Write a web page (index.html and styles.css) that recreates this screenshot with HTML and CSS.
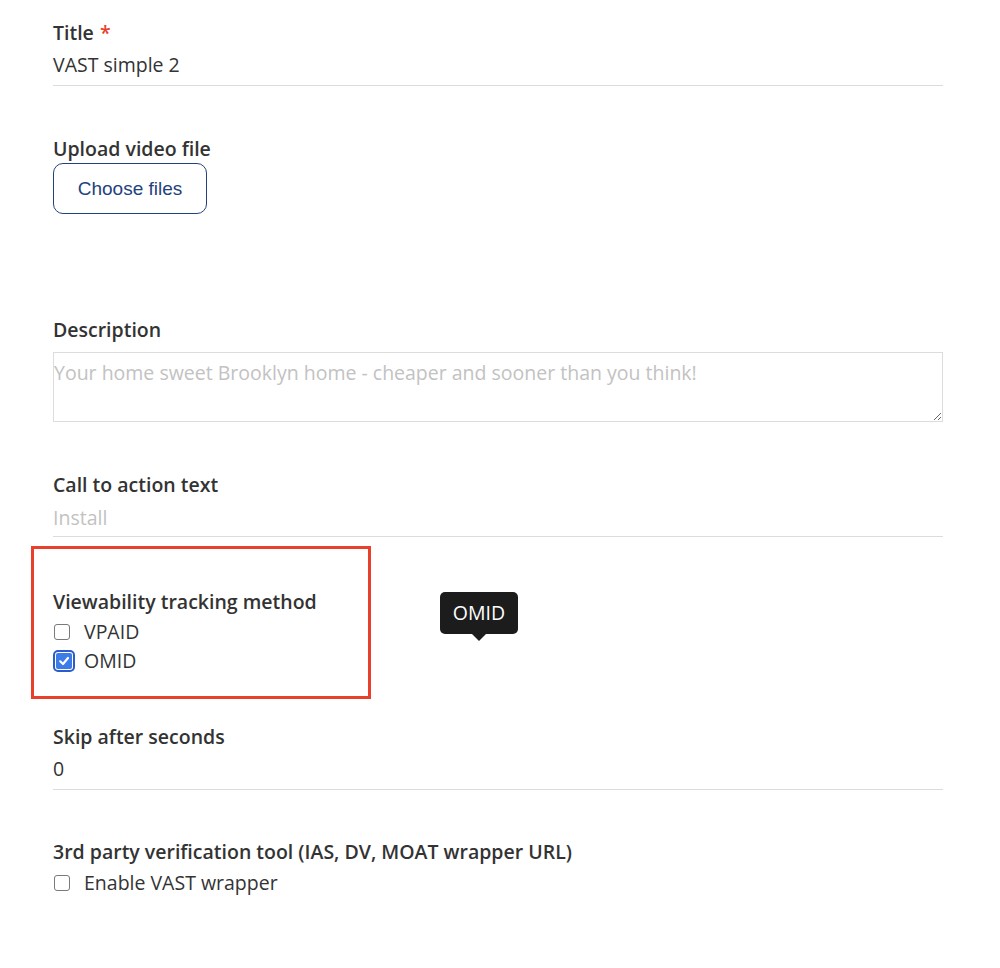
FILE: index.html
```html
<!DOCTYPE html>
<html>
<head>
<meta charset="utf-8">
<link rel="stylesheet" href="styles.css">
</head>
<body>
<form class="form">
  <div class="field">
    <div class="label">Title <span class="req">*</span></div>
    <div class="line-input">VAST simple 2</div>
  </div>

  <div class="field upload">
    <div class="label">Upload video file</div>
    <button type="button" class="file-btn">Choose files</button>
  </div>

  <div class="field desc">
    <div class="label">Description</div>
    <textarea class="textarea" placeholder="Your home sweet Brooklyn home - cheaper and sooner than you think!"></textarea>
  </div>

  <div class="field cta">
    <div class="label">Call to action text</div>
    <div class="line-input placeholder">Install</div>
  </div>

  <div class="field view">
    <div class="annotation"></div>
    <div class="label">Viewability tracking method</div>
    <div class="options">
      <div class="option"><span class="cb"></span><span>VPAID</span></div>
      <div class="option"><span class="cb checked"><svg viewBox="0 0 14 14" width="14" height="14"><path d="M3.2 7.3 L6 10 L11 4" fill="none" stroke="#fff" stroke-width="2.2" stroke-linecap="round" stroke-linejoin="round"/></svg></span><span>OMID</span></div>
    </div>
    <div class="tooltip">OMID</div>
  </div>

  <div class="field skip">
    <div class="label">Skip after seconds</div>
    <div class="line-input">0</div>
  </div>

  <div class="field third">
    <div class="label">3rd party verification tool (IAS, DV, MOAT wrapper URL)</div>
    <div class="options">
      <div class="option"><span class="cb"></span><span>Enable VAST wrapper</span></div>
    </div>
  </div>
</form>
</body>
</html>
```

FILE: styles.css
```css
html, body {
  margin: 0;
  padding: 0;
  background: #fff;
}

.form {
  width: 890px;
  padding: 20px 0 40px 53px;
  font-family: "Open Sans", "DejaVu Sans", sans-serif;
  font-size: 19.5px;
  line-height: 26px;
  color: #333;
}

.field {
  position: relative;
}

.label {
  font-weight: 600;
  color: #333;
}

.req {
  color: #e8402a;
  margin-left: 1px;
}

.line-input {
  padding: 6px 0 7px;
  border-bottom: 1px solid #dcdcdc;
}

.line-input.placeholder {
  color: #c2c2c2;
  padding-top: 7px;
  padding-bottom: 5px;
}

.upload {
  margin-top: 50px;
}

.file-btn {
  margin-top: 1px;
  width: 154px;
  height: 51px;
  border: 1px solid #23427d;
  border-radius: 10px;
  background: #fff;
  color: #23427d;
  font-family: "Liberation Sans", Arial, sans-serif;
  font-size: 19px;
  padding: 0;
  cursor: pointer;
}

.desc {
  margin-top: 103px;
}

.textarea {
  display: block;
  box-sizing: border-box;
  margin-top: 9px;
  width: 890px;
  height: 70px;
  border: 1px solid #dcdcdc;
  border-radius: 0;
  padding: 7px 0 0 0;
  font-family: "Open Sans", "DejaVu Sans", sans-serif;
  font-size: 19.5px;
  line-height: 26px;
  color: #333;
  resize: vertical;
  outline: none;
}

.textarea::placeholder {
  color: #c2c2c2;
}

.cta {
  margin-top: 50px;
}

.view {
  margin-top: 52px;
}

.options {
  margin-top: 2px;
}

.option {
  display: flex;
  align-items: center;
  height: 29px;
}

.cb {
  box-sizing: border-box;
  width: 16px;
  height: 16px;
  border: 1.5px solid #7a7a7a;
  border-radius: 3px;
  margin: 0 14px 0 1px;
  flex: none;
  display: flex;
  align-items: center;
  justify-content: center;
  background: #fff;
}

.cb.checked {
  background: #3c7be8;
  border: none;
  border-radius: 2px;
  outline: 2.5px solid #2b5ccc;
  outline-offset: 1px;
  margin-left: 3px;
  margin-right: 12px;
}

.annotation {
  position: absolute;
  left: -22px;
  top: -43px;
  width: 334px;
  height: 147px;
  border: 3px solid #e8402a;
  pointer-events: none;
}

.tooltip {
  position: absolute;
  left: 387px;
  top: 3px;
  width: 78px;
  height: 42px;
  box-sizing: border-box;
  background: #1c1c1c;
  color: #fff;
  border-radius: 5px;
  font-size: 19.5px;
  line-height: 42px;
  text-align: center;
}

.tooltip::after {
  content: "";
  position: absolute;
  left: 50%;
  bottom: -7px;
  margin-left: -7px;
  border-left: 7px solid transparent;
  border-right: 7px solid transparent;
  border-top: 7px solid #1c1c1c;
}

.skip {
  margin-top: 49px;
}

.third {
  margin-top: 49px;
}

.third .options {
  margin-top: 3px;
}
```
